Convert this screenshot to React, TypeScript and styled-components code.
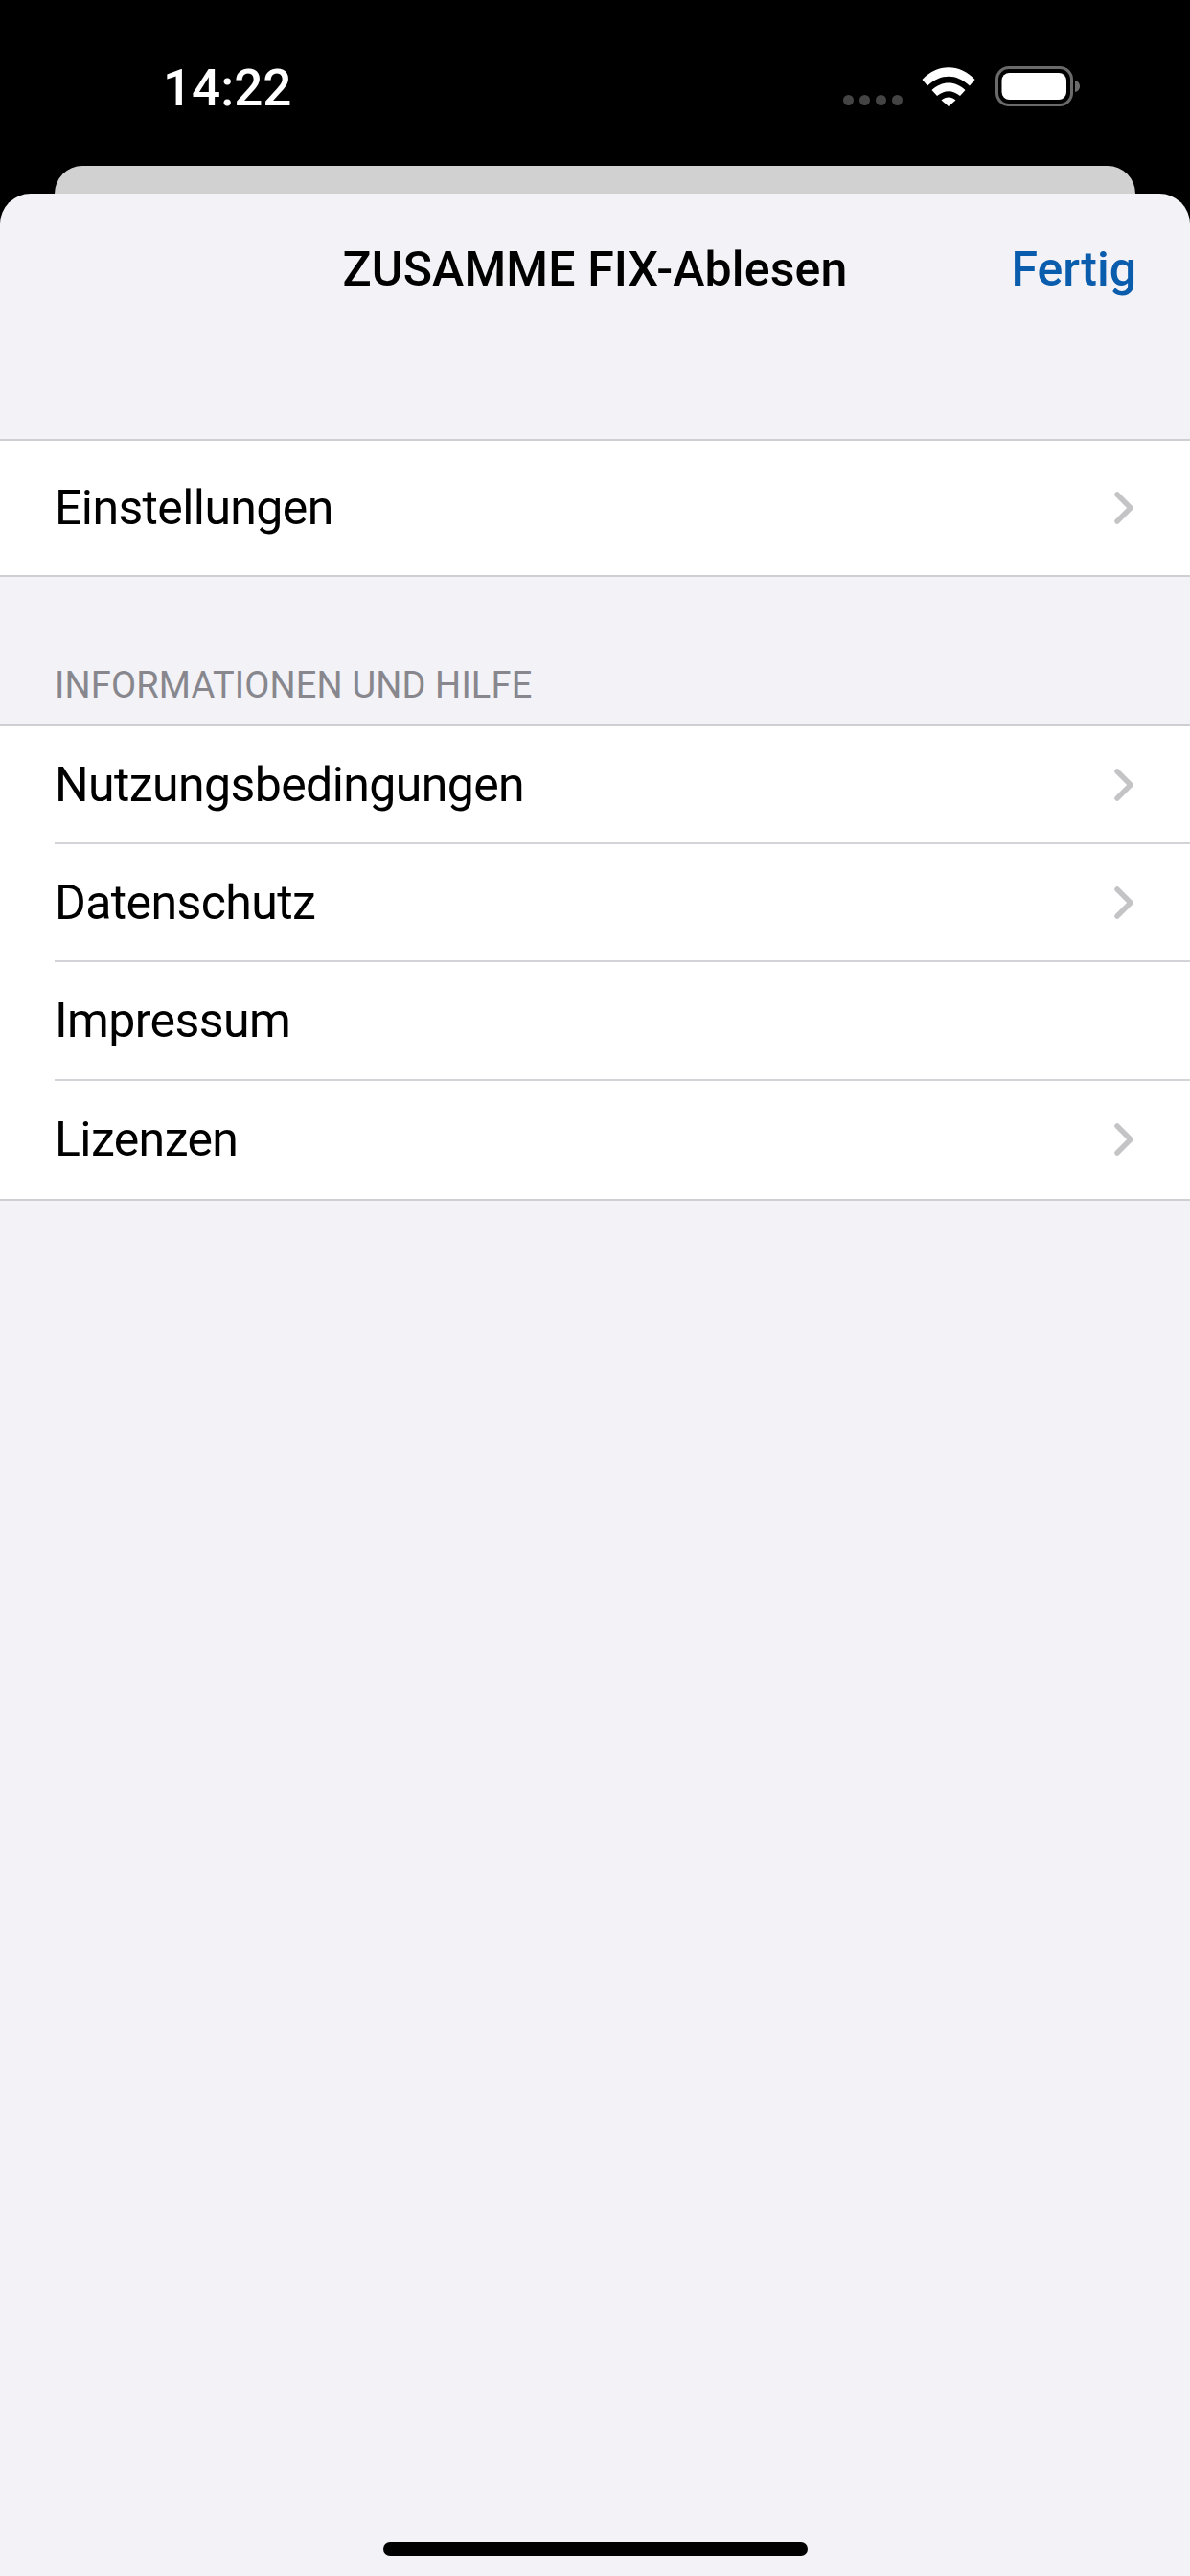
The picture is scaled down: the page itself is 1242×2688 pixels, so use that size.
import { createGlobalStyle } from "styled-components";
import styled from "styled-components";

const GlobalStyle = createGlobalStyle`
  html, body {
    margin: 0;
    padding: 0;
    background: #000;
  }
  * {
    box-sizing: border-box;
  }
`;

const Screen = styled.div`
  width: 1242px;
  height: 2688px;
  display: flex;
  flex-direction: column;
  overflow: hidden;
  background: #000;
  font-family: Roboto, "Liberation Sans", sans-serif;
`;

const StatusBar = styled.div`
  height: 173px;
  flex: none;
  display: flex;
  justify-content: space-between;
  align-items: flex-start;
  padding: 64px 115px 0 170px;
`;

const Time = styled.div`
  font-size: 53px;
  line-height: 56px;
  font-weight: 500;
  color: #fff;
`;

const StatusIcons = styled.div`
  display: flex;
  align-items: flex-end;
  padding-top: 5px;
`;

const Dots = styled.div`
  display: flex;
  gap: 6px;
  margin-right: 20px;
  margin-bottom: 1px;
`;

const Dot = styled.span`
  width: 11px;
  height: 11px;
  border-radius: 50%;
  background: #444;
`;

const WifiIcon = styled.svg`
  width: 56px;
  height: 41px;
  margin-right: 21px;
  display: block;
`;

const BatteryIcon = styled.svg`
  width: 88px;
  height: 42px;
  display: block;
`;

const BackCard = styled.div`
  height: 29px;
  flex: none;
  margin: 0 57px;
  background: #d1d1d1;
  border-radius: 30px 30px 0 0;
`;

const Sheet = styled.div`
  flex: 1;
  display: flex;
  flex-direction: column;
  background: #f2f2f7;
  border-radius: 32px 32px 0 0;
`;

const NavBar = styled.div`
  height: 256px;
  flex: none;
  position: relative;
  display: flex;
  justify-content: center;
  padding-top: 51px;
`;

const NavTitle = styled.div`
  font-size: 50px;
  line-height: 56px;
  font-weight: 500;
  letter-spacing: 0.15px;
  color: #000;
`;

const DoneButton = styled.div`
  position: absolute;
  right: 56px;
  top: 51px;
  font-size: 50px;
  line-height: 56px;
  font-weight: 500;
  color: #0a5cad;
`;

const Group = styled.div`
  background: #fff;
  border-top: 2px solid #cfcfd3;
  border-bottom: 2px solid #cfcfd3;
`;

const Row = styled.div<{ $tall?: boolean; $divided?: boolean }>`
  height: ${(p) => (p.$tall ? 140 : 123.2)}px;
  margin-left: 57px;
  padding-right: 59px;
  display: flex;
  align-items: center;
  justify-content: space-between;
  border-bottom: ${(p) => (p.$divided ? "2px solid #d4d4d8" : "none")};
`;

const RowLabel = styled.span`
  font-size: 50px;
  line-height: 56px;
  font-weight: 400;
  letter-spacing: -0.6px;
  color: #000;
`;

const Chevron = styled.svg`
  width: 20px;
  height: 36px;
  display: block;
`;

const SectionHeader = styled.div`
  margin-top: 92px;
  height: 62px;
  padding: 0 0 0 57px;
  font-size: 38px;
  line-height: 42px;
  font-weight: 400;
  letter-spacing: 0.15px;
  color: #87878d;
`;

const HomeIndicator = styled.div`
  width: 443px;
  height: 14px;
  margin: auto auto 21px;
  flex: none;
  border-radius: 7px;
  background: #000;
`;

const Arrow = () => (
  <Chevron viewBox="0 0 20 36" fill="none">
    <path
      d="M3 4 L17 18 L3 32"
      stroke="#c4c4c6"
      strokeWidth="5.5"
      strokeLinecap="round"
      strokeLinejoin="round"
    />
  </Chevron>
);

const infoRows = [
  { label: "Nutzungsbedingungen", arrow: true },
  { label: "Datenschutz", arrow: true },
  { label: "Impressum", arrow: false },
  { label: "Lizenzen", arrow: true },
];

export default function App() {
  return (
    <>
      <GlobalStyle />
      <Screen>
        <StatusBar>
          <Time>14:22</Time>
          <StatusIcons>
            <Dots>
              <Dot />
              <Dot />
              <Dot />
              <Dot />
            </Dots>
            <WifiIcon viewBox="0 0 56 41" fill="#fff">
              <path d="M0.5 13 C16 -4 40 -4 55.5 13 L50 19.5 C36 6.5 20 6.5 6 19.5 Z" />
              <path d="M10.5 24 C21 14 35 14 45.5 24 L40 30 C32 23.5 24 23.5 16 30 Z" />
              <path d="M20.5 34.5 C25 30.5 31 30.5 35.5 34.5 L28 41 Z" />
            </WifiIcon>
            <BatteryIcon viewBox="0 0 88 42" fill="none">
              <rect x="1.5" y="1.5" width="78" height="39" rx="12.5" stroke="#6a6a6a" strokeWidth="3" />
              <rect x="6.5" y="7" width="67.5" height="28" rx="8" fill="#fff" />
              <path d="M83 15 C86 15.5 88 18 88 21 C88 24 86 26.5 83 27 Z" fill="#6a6a6a" />
            </BatteryIcon>
          </StatusIcons>
        </StatusBar>
        <BackCard />
        <Sheet>
          <NavBar>
            <NavTitle>ZUSAMME FIX-Ablesen</NavTitle>
            <DoneButton>Fertig</DoneButton>
          </NavBar>
          <Group>
            <Row $tall>
              <RowLabel>Einstellungen</RowLabel>
              <Arrow />
            </Row>
          </Group>
          <SectionHeader>INFORMATIONEN UND HILFE</SectionHeader>
          <Group>
            {infoRows.map((row, i) => (
              <Row key={row.label} $divided={i < infoRows.length - 1}>
                <RowLabel>{row.label}</RowLabel>
                {row.arrow && <Arrow />}
              </Row>
            ))}
          </Group>
          <HomeIndicator />
        </Sheet>
      </Screen>
    </>
  );
}
